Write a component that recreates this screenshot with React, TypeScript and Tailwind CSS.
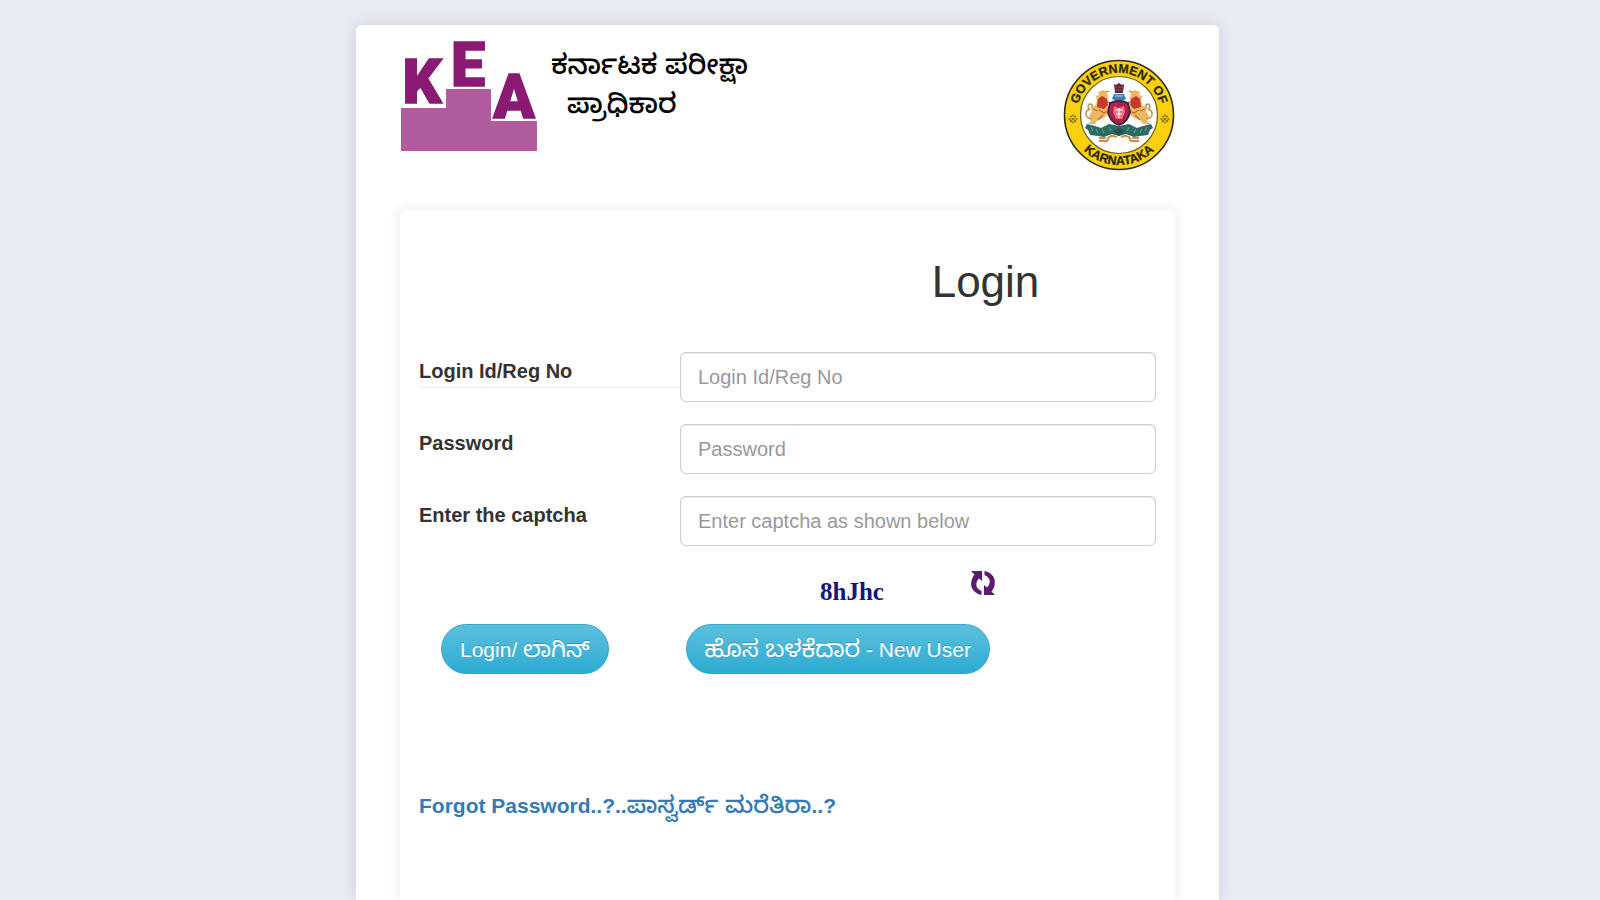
const Emblem = () => {
  return (
    <svg
      viewBox="0 0 112 112"
      className="h-28 w-28"
      role="img"
      aria-label="Government of Karnataka"
    >
      <defs>
        <path id="ring-top" d="M 14.2 60 A 42 42 0 1 1 97.8 60" />
        <path id="ring-bottom" d="M 14 83.1 A 50 50 0 0 0 98 83.1" />
      </defs>
      <circle cx="56" cy="56" r="54.5" fill="#fbd00e" stroke="#2e2a14" strokeWidth="1.6" />
      <circle cx="56" cy="56" r="38.5" fill="#fff" stroke="#6b5d1c" strokeWidth="1.2" />
      <g
        fill="#2b2608"
        stroke="#2b2608"
        strokeWidth="0.3"
        fontFamily="Liberation Sans, Arial, sans-serif"
        fontWeight="700"
        fontSize="12.5"
        textAnchor="middle"
      >
        <text>
          <textPath href="#ring-top" startOffset="50%">
            GOVERNMENT OF
          </textPath>
        </text>
        <text>
          <textPath href="#ring-bottom" startOffset="50%">
            KARNATAKA
          </textPath>
        </text>
      </g>
      <g fill="none" stroke="#8f7a1c" strokeWidth="1.2">
        <path d="M6 60l4-4 4 4-4 4zM7 57l6 6M13 57l-6 6" />
        <path d="M98 60l4-4 4 4-4 4zM99 57l6 6M105 57l-6 6" />
      </g>
      <path d="M51 25l2 1 3-2 3 2 2-1-1 9h-8z" fill="#5d2138" />
      <path d="M52 28h8M52 31h8" stroke="#a4495a" strokeWidth="1" />
      <path d="M51 35h10l2 5-7 3-7-3z" fill="#3c7fae" />
      <path d="M52 37h8" stroke="#b5dcea" strokeWidth="1" />
      {/* the right half mirrors the left */}
      {[undefined, "matrix(-1 0 0 1 112 0)"].map((transform, i) => (
        <g key={i} transform={transform}>
          <path
            d="M48 48l-4-2 1-6-1-7-4-2-5 2 1 3-3 1 1 5-2 5-5 1 2 4-3 5 2 5-3 3 7 0 3-4 6-2 3-3 4 1z"
            fill="#eeb863"
          />
          <path d="M35 40l4-3 5 3 1 6-4 4-7-2z" fill="#c8382f" />
          <path d="M36 51l5 3 5-2M30 50l5 2M40 56l-5 5M43 33l3-1M44 43l4 1" fill="none" stroke="#b8722f" strokeWidth="1.3" />
          <path
            d="M29 60q-7-1-6-6 1-4 4-3M27 51q-4-4 0-6 3 0 2 3"
            fill="none"
            stroke="#b79c5a"
            strokeWidth="1.6"
          />
          <path
            d="M56 67l-10-2-8 4-6-2-8-2-2 4 3 2 2 5 8 1 6 1 8-3 7 2z"
            fill="#2c6b62"
          />
          <path d="M28 68l2 4M33 70l2 4M39 70l2 4M46 68l2 4" stroke="#6fa392" strokeWidth="1" />
          <path d="M54 78q-5-2-8 0l-2 4h-8M43 79h-7" fill="none" stroke="#d28b48" strokeWidth="2" />
        </g>
      ))}
      <path d="M47 44q9-4 18 0l2 9q-2 10-11 13-9-3-11-13z" fill="#b51f42" stroke="#35274d" strokeWidth="1.8" />
      <path d="M51 47l5 2 5-2 1 6-3 7h-6l-3-7z" fill="#e9708a" />
      <path d="M52 51h8M53 55h6M56 49v10" stroke="#fff" strokeWidth="1" />
      <path d="M50 72l6-3 6 3-6 5z" fill="#244f55" />
    </svg>
  );
};

const KeaLogo = () => {
  return (
    <svg
      viewBox="0 -16 136 128"
      className="h-32 w-[136px]"
      role="img"
      aria-label="KEA"
    >
      <path d="M0 67h45V48h45v32h46v30H0z" fill="#b15c9f" />
      <g
        fill="#8a1a72"
        stroke="#8a1a72"
        strokeWidth="1.5"
        fontFamily="Roboto, Lato, sans-serif"
        fontWeight="900"
        fontSize="61"
        textAnchor="middle"
      >
        <text x="21" y="62">K</text>
        <text x="67" y="45">E</text>
        <text x="113" y="77">A</text>
      </g>
    </svg>
  );
};

const RefreshIcon = () => {
  return (
    <svg viewBox="0 0 26 26" className="h-[26px] w-[26px]" fill="#5b1a6b">
      <path d="M1 1h11v10L9 8.500Q5.500 12 6.500 16.500 8 20 11.500 21v4Q4 23.500 1.500 17 0 10 4.500 4.500z" />
      <path d="M25 25H14V15l3 2.500Q20.500 14 19.500 9.500 18 6 14.500 5V1q7.500 1.500 10 8 1.500 7-3 12.500z" />
    </svg>
  );
};

const fields = [
  { id: "loginId", type: "text", label: "Login Id/Reg No", placeholder: "Login Id/Reg No" },
  { id: "password", type: "password", label: "Password", placeholder: "Password" },
  { id: "captcha", type: "text", label: "Enter the captcha", placeholder: "Enter captcha as shown below" },
];

const buttonClass =
  "h-[50px] rounded-full border border-[#35a9cc] bg-gradient-to-b from-[#5bc0de] to-[#2aabd2] px-[18px] text-[21px] leading-7 whitespace-nowrap text-white [text-shadow:0_-1px_0_rgba(0,0,0,0.2)]";

const App = () => {
  return (
    <div className="flex min-h-screen justify-center bg-[#e8ebf4] pt-[25px] pr-[25px] font-['Liberation_Sans','Noto_Sans_Kannada',Arial,sans-serif] text-xl text-[#333]">
      <main className="flex w-full max-w-[863px] flex-col rounded-t-md bg-white px-11 shadow-[0_0_16px_rgba(0,0,0,0.12)]">
        <header className="flex items-start pl-px">
          <KeaLogo />
          <p lang="kn" className="ml-3.5 pt-5 text-[28px] leading-[39px] font-medium text-black">
            ಕರ್ನಾಟಕ ಪರೀಕ್ಷಾ
            <br />
            <span className="ml-4">ಪ್ರಾಧಿಕಾರ</span>
          </p>
          <div className="mt-[34px] ml-auto">
            <Emblem />
          </div>
        </header>

        <form className="mt-[39px] flex-1 rounded-t-md bg-white px-[19px] shadow-[0_0_12px_2px_rgba(0,0,0,0.07)]">
          <h1 className="pt-10 pl-[396px] text-center text-[44px] leading-[64px]">
            Login
          </h1>

          <div className="mt-[38px] flex flex-col gap-[22px]">
            {fields.map((field, i) => (
              <div key={field.id} className="flex items-start">
                <label
                  htmlFor={field.id}
                  className={
                    i === 0
                      ? "w-[261px] border-b border-[#eee] pt-[5px] pb-0.5 leading-7 font-bold"
                      : "w-[261px] pt-[5px] leading-7 font-bold"
                  }
                >
                  {field.label}
                </label>
                <input
                  id={field.id}
                  type={field.type}
                  placeholder={field.placeholder}
                  className="h-[50px] min-w-0 flex-1 rounded-md border border-[#ccc] px-[17px] shadow-[inset_0_1px_1px_rgba(0,0,0,0.075)] placeholder:text-[#999]"
                />
              </div>
            ))}
          </div>

          <div className="mt-6 flex items-start pl-[401px]">
            <span className="pt-2 font-['Liberation_Serif',serif] text-[25px] leading-7 font-bold text-[#15157a]">
              8hJhc
            </span>
            <button type="button" aria-label="Refresh captcha" className="ml-[86px]">
              <RefreshIcon />
            </button>
          </div>

          <div className="mt-[18px] flex gap-[77px] pl-[22px]">
            <button type="submit" className={buttonClass}>
              Login/ <span lang="kn" className="text-[23px]">ಲಾಗಿನ್</span>
            </button>
            <button type="button" className={buttonClass}>
              <span lang="kn" className="text-2xl leading-7">ಹೊಸ ಬಳಕೆದಾರ</span> - New User
            </button>
          </div>

          <a href="#forgot" className="mt-[117px] inline-block text-[21px] leading-7 font-bold text-[#337ab7]">
            Forgot Password..?..
            <span lang="kn" className="text-2xl leading-7 font-medium">ಪಾಸ್ವರ್ಡ್ ಮರೆತಿರಾ</span>
            ..?
          </a>
        </form>
      </main>
    </div>
  );
};

export default App;
